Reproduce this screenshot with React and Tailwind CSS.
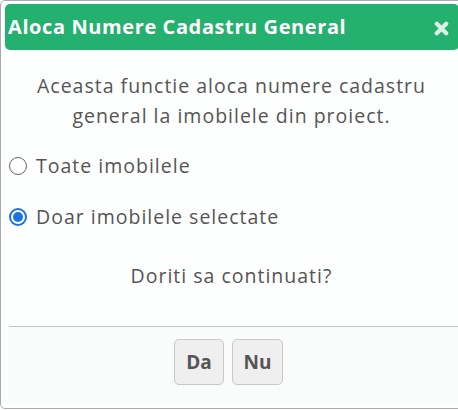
export default function App() {
  return (
    <div className="w-[458px] h-[410px] bg-white overflow-hidden" style={{ fontFamily: "'Open Sans', sans-serif" }}>
      <div className="w-[470px] h-[409px] border border-[#aaaaaa] rounded-[5px] bg-[#fdfefe] p-[3px] pr-[10px] flex flex-col">
        <div className="h-[46px] shrink-0 ml-[1px] rounded-[5px] bg-[#24b06f] flex items-center justify-between pl-[3px] pr-[8px]">
          <span className="text-white font-bold text-[20px] tracking-[0.6px]">Aloca Numere Cadastru General</span>
          <svg width="15" height="15" viewBox="0 0 16 16" className="mr-[2px] mt-[2px]">
            <path d="M3 3 L13 13 M13 3 L3 13" stroke="#dcefe5" strokeWidth="4.5" strokeLinecap="round" />
          </svg>
        </div>
        <div className="flex-1 flex flex-col text-[#555555] text-[19.5px] tracking-[1px] leading-[30px]">
          <p className="text-center mt-[21px]">
            Aceasta functie aloca numere cadastru<br />general la imobilele din proiect.
          </p>
          <label className="flex items-center gap-[9px] mt-[20px] pl-[5px]">
            <span className="w-[18px] h-[18px] rounded-full border-[1.5px] border-[#666] bg-white" />
            <span>Toate imobilele</span>
          </label>
          <label className="flex items-center gap-[9px] mt-[21px] pl-[5px]">
            <span className="w-[18px] h-[18px] rounded-full bg-[#1a73e8] flex items-center justify-center">
              <span className="w-[14px] h-[14px] rounded-full bg-white flex items-center justify-center">
                <span className="w-[10px] h-[10px] rounded-full bg-[#1a73e8]" />
              </span>
            </span>
            <span>Doar imobilele selectate</span>
          </label>
          <p className="text-center mt-[29px]">Doriti sa continuati?</p>
          <div className="mt-[35px] ml-[5px] border-t border-[#c4c4c4] bg-[#fafbfb] h-[77px] flex justify-center items-start pt-[12px] gap-[8px] pr-[11px]">
            <button className="w-[50px] h-[46px] rounded-[5px] border border-[#c8c8c8] bg-[#efefef] font-bold text-[19px] tracking-[0px] text-[#555]">Da</button>
            <button className="w-[51px] h-[46px] rounded-[5px] border border-[#c8c8c8] bg-[#efefef] font-bold text-[19px] tracking-[0px] text-[#555]">Nu</button>
          </div>
        </div>
      </div>
    </div>
  );
}
